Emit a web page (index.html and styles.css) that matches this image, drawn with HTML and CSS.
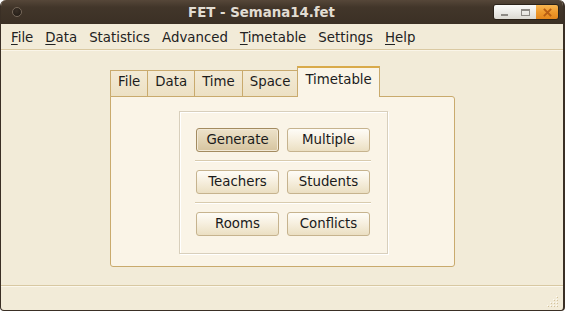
FILE: index.html
```html
<!DOCTYPE html>
<html>
<head>
<meta charset="utf-8">
<link rel="stylesheet" href="styles.css">
</head>
<body>
<div class="window">
  <div class="titlebar">
    <div class="tb-left"><span class="wicon"></span></div>
    <div class="title">FET - Semana14.fet</div>
    <div class="wbtns">
      <span class="wb wb-min"><svg width="9" height="9" viewBox="0 0 9 9"><rect x="1" y="6" width="7" height="2" fill="#8d8a85"/></svg></span>
      <span class="wb wb-max"><svg width="11" height="9" viewBox="0 0 11 9"><rect x="1.5" y="1.5" width="8" height="6" fill="none" stroke="#8d8a85" stroke-width="1"/><rect x="1" y="1" width="9" height="2" fill="#8d8a85"/></svg></span>
      <span class="wb wb-close"><svg width="9" height="9" viewBox="0 0 9 9"><path d="M1.5 1.5 L7.5 7.5 M7.5 1.5 L1.5 7.5" stroke="#b85e14" stroke-width="1.8" stroke-linecap="square"/></svg></span>
    </div>
  </div>
  <div class="menubar">
    <span class="mi"><u>F</u>ile</span>
    <span class="mi"><u>D</u>ata</span>
    <span class="mi">Statistics</span>
    <span class="mi">Advanced</span>
    <span class="mi"><u>T</u>imetable</span>
    <span class="mi">Settings</span>
    <span class="mi"><u>H</u>elp</span>
  </div>
  <div class="main">
    <div class="tabwidget">
      <div class="tabs">
        <span class="tab">File</span>
        <span class="tab">Data</span>
        <span class="tab">Time</span>
        <span class="tab">Space</span>
        <span class="tab tab-sel">Timetable</span>
      </div>
      <div class="panel">
        <div class="group">
          <div class="row"><button class="btn btn-default">Generate</button><button class="btn">Multiple</button></div>
          <div class="sep"></div>
          <div class="row"><button class="btn">Teachers</button><button class="btn">Students</button></div>
          <div class="sep"></div>
          <div class="row"><button class="btn">Rooms</button><button class="btn">Conflicts</button></div>
        </div>
      </div>
    </div>
  </div>
  <div class="statusbar">
    <svg class="grip" width="12" height="12" viewBox="0 0 12 12">
      <g fill="#fdfaf2">
        <rect x="9" y="0" width="1" height="1"/>
        <rect x="6" y="3" width="1" height="1"/><rect x="9" y="3" width="1" height="1"/>
        <rect x="3" y="6" width="1" height="1"/><rect x="6" y="6" width="1" height="1"/><rect x="9" y="6" width="1" height="1"/>
        <rect x="0" y="9" width="1" height="1"/><rect x="3" y="9" width="1" height="1"/><rect x="6" y="9" width="1" height="1"/><rect x="9" y="9" width="1" height="1"/>
      </g>
      <g fill="#d3c29c">
        <rect x="10" y="1" width="1" height="1"/>
        <rect x="7" y="4" width="1" height="1"/><rect x="10" y="4" width="1" height="1"/>
        <rect x="4" y="7" width="1" height="1"/><rect x="7" y="7" width="1" height="1"/><rect x="10" y="7" width="1" height="1"/>
        <rect x="1" y="10" width="1" height="1"/><rect x="4" y="10" width="1" height="1"/><rect x="7" y="10" width="1" height="1"/><rect x="10" y="10" width="1" height="1"/>
      </g>
    </svg>
  </div>
</div>
</body>
</html>
```
FILE: styles.css
```css
html, body {
  margin: 0;
  padding: 0;
  background: #ffffff;
}
body {
  width: 565px;
  height: 311px;
  overflow: hidden;
  font-family: "DejaVu Sans", "Liberation Sans", sans-serif;
  font-size: 13.33px;
  color: #1c1c1c;
}
.window {
  box-sizing: border-box;
  width: 565px;
  height: 311px;
  display: flex;
  flex-direction: column;
  background: #f2ebd8;
  border-left: 1px solid #3a2f25;
  border-right: 2px solid #3a2f25;
  border-bottom: 1px solid #3a2f25;
  border-radius: 6px 6px 4px 4px;
  overflow: hidden;
}
.titlebar {
  flex: none;
  height: 24px;
  display: flex;
  align-items: center;
  background: linear-gradient(#564739, #42362a 30%, #3b3025);
  color: #e2ddd3;
}
.tb-left {
  width: 29px;
  box-sizing: border-box;
  padding-left: 11px;
  display: flex;
  align-items: center;
}
.wicon {
  width: 10px;
  height: 10px;
  box-sizing: border-box;
  border-radius: 50%;
  border: 1px solid #76685a;
  background: radial-gradient(circle at 45% 35%, #3a3027, #1e1812);
}
.title {
  flex: 1;
  text-align: center;
  font-weight: bold;
  font-size: 13.33px;
}
.wbtns {
  display: flex;
  height: 16px;
  box-sizing: border-box;
  margin-right: 4px;
  border: 1px solid #2b2219;
  border-radius: 3px;
  overflow: hidden;
}
.wb {
  display: flex;
  align-items: center;
  justify-content: center;
  width: 21px;
  background: linear-gradient(#fbfbf9, #ecebe7 50%, #dcd9d2);
}
.wb-close {
  width: 22px;
  background: linear-gradient(#f8b652, #ef9a2c 50%, #e4861c);
}
.menubar {
  flex: none;
  height: 25px;
  display: flex;
  align-items: center;
  padding-left: 4px;
  border-bottom: 1px solid #dac9a2;
  box-shadow: 0 1px 0 #faf5e9;
  color: #222222;
  line-height: 25px;
}
.mi {
  padding: 1px 6px 0;
}
.mi u {
  text-underline-offset: 2px;
}
.main {
  flex: 1;
  padding: 17px 0 0 109px;
}
.tabs {
  display: flex;
  align-items: flex-end;
  height: 30px;
  margin-bottom: -1px;
  position: relative;
}
.tab {
  box-sizing: border-box;
  height: 27px;
  padding: 0 7px;
  border: 1px solid #c9aa6d;
  border-bottom: 0;
  margin-right: -1px;
  background: linear-gradient(#f3ead5, #ece0c3);
  line-height: 22px;
  color: #1c1c1c;
}
.tab-sel {
  height: 31px;
  position: relative;
  z-index: 2;
  background: #faf4e7;
  border-color: #c9aa6d;
  border-top: 2px solid #d9aa4a;
  line-height: 23px;
  padding: 0 7px 0 7px;
}
.panel {
  box-sizing: border-box;
  width: 345px;
  height: 171px;
  border: 1px solid #c9aa6d;
  border-radius: 0 3px 3px 3px;
  background: #faf4e7;
  padding: 14px 0 0 68px;
  position: relative;
  z-index: 1;
}
.group {
  box-sizing: border-box;
  width: 209px;
  height: 143px;
  border: 1px solid #d8cfbc;
  box-shadow: 1px 1px 0 #ffffff, inset 1px 1px 0 #ffffff;
  padding: 16px 17px 0 16px;
}
.row {
  display: flex;
  gap: 8px;
}
.btn {
  box-sizing: border-box;
  width: 83px;
  height: 24px;
  padding: 0;
  margin: 0;
  border: 1px solid #c6b38e;
  border-radius: 3px;
  background: linear-gradient(#fefcf7, #f7f0e0 45%, #ebdfc2);
  font-family: "DejaVu Sans", "Liberation Sans", sans-serif;
  font-size: 13.33px;
  color: #1a1a1a;
  line-height: 22px;
  text-align: center;
}
.btn-default {
  border-color: #a38b60;
  box-shadow: inset 0 0 0 1px #f2e9d6;
  background: linear-gradient(#ede2ca, #e2d4b5 50%, #d6c49f);
}
.sep {
  height: 1px;
  margin: 8px -1px 9px;
  background: #d8cbae;
  box-shadow: 0 1px 0 #ffffff;
}
.statusbar {
  flex: none;
  box-sizing: border-box;
  height: 25px;
  border-top: 1px solid #d8c8a2;
  box-shadow: inset 0 1px 0 #fbf7ec;
  display: flex;
  justify-content: flex-end;
  align-items: flex-end;
  padding: 0 4px 2px 0;
}
```
